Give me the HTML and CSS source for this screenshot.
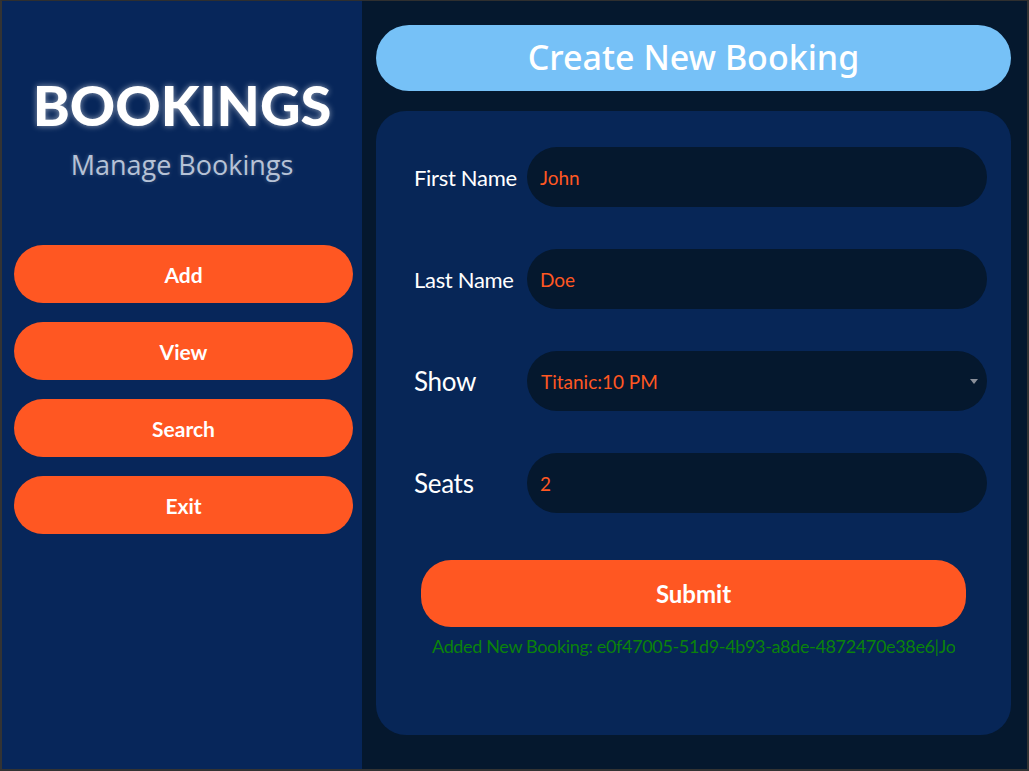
FILE: index.html
```html
<!DOCTYPE html>
<html>
<head>
<meta charset="utf-8">
<link rel="stylesheet" href="styles.css">
</head>
<body>
<div class="window">
  <aside class="sidebar">
    <h1 class="brand">BOOKINGS</h1>
    <div class="subtitle">Manage Bookings</div>
    <nav class="menu">
      <button class="menu-btn">Add</button>
      <button class="menu-btn">View</button>
      <button class="menu-btn">Search</button>
      <button class="menu-btn">Exit</button>
    </nav>
  </aside>
  <main class="main">
    <div class="header">Create New Booking</div>
    <section class="card">
      <div class="row">
        <label class="label">First Name</label>
        <div class="field">John</div>
      </div>
      <div class="row">
        <label class="label">Last Name</label>
        <div class="field">Doe</div>
      </div>
      <div class="row">
        <label class="label big">Show</label>
        <div class="field select">Titanic:10 PM<span class="caret"></span></div>
      </div>
      <div class="row">
        <label class="label big">Seats</label>
        <div class="field">2</div>
      </div>
      <button class="submit">Submit</button>
      <div class="message">Added New Booking: e0f47005-51d9-4b93-a8de-4872470e38e6|John|Doe|Titanic:10 PM|2</div>
    </section>
  </main>
</div>
</body>
</html>
```
FILE: styles.css
```css
html, body {
  margin: 0;
  padding: 0;
  background: #2e2e2e;
}
.window {
  width: 1029px;
  height: 771px;
  box-sizing: border-box;
  border-top: 1px solid #2f2f2f;
  border-left: 2px solid #333;
  border-right: 2px solid #333;
  border-bottom: 2px solid #333;
  display: flex;
  background: #05182e;
  font-family: "Lato", "Liberation Sans", sans-serif;
  overflow: hidden;
}
.sidebar {
  width: 360px;
  flex: none;
  background: #07265a;
  display: flex;
  flex-direction: column;
  align-items: center;
}
.brand {
  margin: 72px 0 0;
  font-family: "Lato", sans-serif;
  font-weight: 900;
  font-size: 56px;
  line-height: 64px;
  color: #fff;
  text-shadow: 0 0 6px rgba(255,255,255,0.55);
}
.subtitle {
  margin-top: 11px;
  font-family: "Open Sans", "Noto Sans", sans-serif;
  font-size: 27px;
  line-height: 34px;
  color: #b6c2d6;
  text-shadow: 0 0 4px rgba(255,255,255,0.25);
}
.menu {
  margin-top: 63px;
  align-self: flex-start;
  margin-left: 12px;
  width: 339px;
  display: flex;
  flex-direction: column;
  gap: 19px;
}
.menu-btn {
  height: 58px;
  border: none;
  border-radius: 29px;
  background: #ff5722;
  color: #fff;
  font-family: "Lato", sans-serif;
  font-weight: 700;
  font-size: 21px;
  padding: 0;
}
.main {
  flex: 1;
  min-width: 0;
  padding: 24px 16px 0 14px;
  display: flex;
  flex-direction: column;
}
.header {
  height: 66px;
  border-radius: 33px;
  background: #76c1f7;
  color: #fff;
  font-family: "Noto Sans", "Open Sans", sans-serif;
  font-weight: 500;
  font-size: 34px;
  display: flex;
  align-items: center;
  justify-content: center;
  padding-bottom: 3px;
  box-sizing: border-box;
}
.card {
  margin-top: 20px;
  height: 624px;
  border-radius: 30px;
  background: #072657;
  padding: 36px 24px 0 38px;
  box-sizing: border-box;
  display: flex;
  flex-direction: column;
  gap: 42px;
  min-width: 0;
}
.row {
  display: flex;
  align-items: center;
  height: 60px;
}
.label {
  width: 113px;
  flex: none;
  color: #fff;
  font-size: 22px;
  letter-spacing: -0.3px;
}
.label.big {
  font-size: 26px;
}
.field {
  flex: 1;
  height: 60px;
  border-radius: 30px;
  background: #05182e;
  color: #ff5722;
  font-size: 19px;
  display: flex;
  align-items: center;
  padding-left: 13px;
  box-sizing: border-box;
  position: relative;
}
.select {
  padding-left: 14px;
}
.caret {
  position: absolute;
  right: 9px;
  top: 28px;
  width: 0;
  height: 0;
  border-left: 4px solid transparent;
  border-right: 4px solid transparent;
  border-top: 5px solid #8a8f99;
}
.submit {
  margin: 5px 21px 0 7px;
  height: 67px;
  border: none;
  border-radius: 30px;
  background: #ff5722;
  color: #fff;
  font-family: "Lato", sans-serif;
  font-weight: 700;
  font-size: 24px;
  padding: 0;
}
.message {
  margin: -34px 32px 0 18px;
  color: #0b820b;
  font-size: 18px;
  letter-spacing: -0.35px;
  white-space: nowrap;
  overflow: hidden;
  min-width: 0;
}
```
